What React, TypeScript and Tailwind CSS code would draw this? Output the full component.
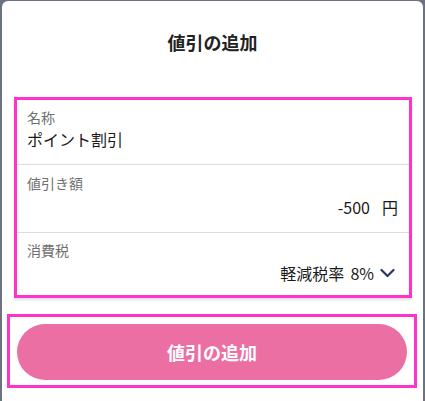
import React from "react";

const font = { fontFamily: '"Noto Sans CJK JP", "Noto Sans", sans-serif' };

const Field = ({
  label,
  children,
  className,
}: {
  label: string;
  children: React.ReactNode;
  className: string;
}) => {
  return (
    <div className={className}>
      <div className="text-sm leading-5 text-[#6f6f6f]">{label}</div>
      {children}
    </div>
  );
};

const App = () => {
  return (
    <div
      className="h-[401px] w-[425px] bg-[#6b7280] pt-px pl-[2px] pr-[2px]"
      style={font}
    >
      <div className="flex h-full flex-col rounded-t-md bg-white">
        <h1 className="pt-[29px] text-center text-lg font-bold leading-6 text-[#222]">
          値引の追加
        </h1>

        <div className="ml-[12px] mr-[11px] mt-[43px] border-[3px] border-[#fd33cb] shadow-[0_2px_2px_rgba(0,0,0,0.12)]">
          <Field label="名称" className="h-[65px] border-b border-[#dcdcdc] px-[10px] pt-[7px]">
            <div className="text-base leading-6 text-[#1a1a1a]">ポイント割引</div>
          </Field>
          <Field label="値引き額" className="h-[68px] border-b border-[#dcdcdc] px-[10px] pt-[8px]">
            <div className="mt-[2px] flex justify-end pr-px text-base leading-6 text-[#1a1a1a]">
              <span>-500</span>
              <span className="ml-[12px]">円</span>
            </div>
          </Field>
          <Field label="消費税" className="h-[62px] px-[10px] pt-[7px]">
            <div className="mt-px flex items-center justify-end pr-[4px] text-base leading-6 text-[#1a1a1a]">
              <span>軽減税率</span>
              <span className="ml-[6px]">8%</span>
              <svg className="ml-[6px]" width="15" height="10" viewBox="0 0 15 10" fill="none">
                <path
                  d="M1.5 2L7.5 8L13.5 2"
                  stroke="#2c3566"
                  strokeWidth="2.2"
                  strokeLinecap="round"
                  strokeLinejoin="round"
                />
              </svg>
            </div>
          </Field>
        </div>

        <div className="ml-[5px] mr-[6px] mt-[16px] border-[3px] border-[#fd33cb] px-[7px] pb-[5px] pt-[7px]">
          <button className="h-[56px] w-full rounded-full bg-[#ec6fa4] text-lg font-bold text-white">
            値引の追加
          </button>
        </div>
      </div>
    </div>
  );
};

export default App;
